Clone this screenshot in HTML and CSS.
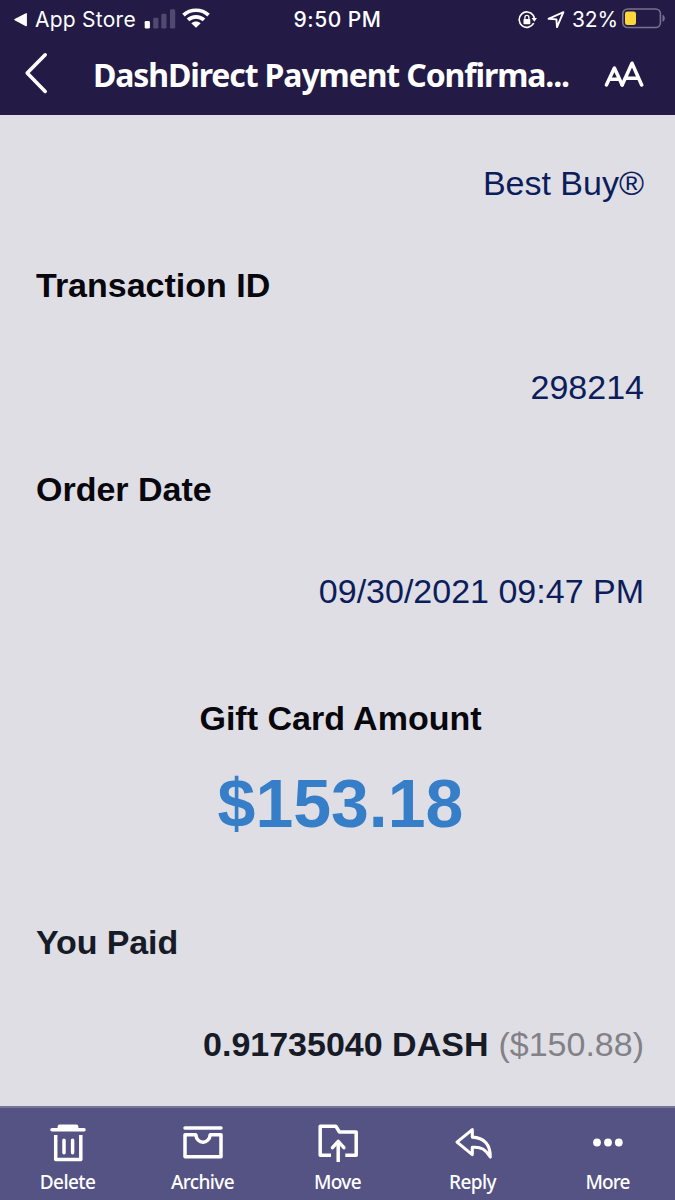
FILE: index.html
```html
<!DOCTYPE html>
<html lang="en">
<head>
<meta charset="utf-8">
<title>DashDirect Payment Confirmation</title>
<link rel="stylesheet" href="styles.css">
</head>
<body>
<div class="screen">
  <header class="top">
    <div class="status">
      <div class="status-left">
        <svg class="back-app" width="14" height="14" viewBox="0 0 14 14"><path d="M1 6.7 12.2.8V12.6Z" fill="#fff" stroke="#fff" stroke-width="1.4" stroke-linejoin="round"/></svg>
        <span class="app-name">App Store</span>
        <svg class="signal" width="32" height="20" viewBox="0 0 32 20"><rect x=".7" y="12" width="5.2" height="7.5" rx="1.3" fill="#fff"/><g fill="#504970"><rect x="9.2" y="8.7" width="5.2" height="10.8" rx="1.3"/><rect x="17.3" y="4.7" width="5.2" height="14.8" rx="1.3"/><rect x="26" y=".3" width="5.2" height="19.2" rx="1.3"/></g></svg>
        <svg class="wifi" width="28" height="20" viewBox="0 0 28 20"><g fill="none" stroke="#fff" stroke-width="3.7"><path d="M1.5 7.1C8.4.6 19.6.6 26.5 7.1"/><path d="M6 11.9c4.4-4.1 11.6-4.1 16 0"/></g><path d="M9.3 15.3c2.7-2.3 6.7-2.3 9.4 0L14 19.8Z" fill="#fff"/></svg>
      </div>
      <span class="time">9:50 PM</span>
      <div class="status-right">
        <svg class="lock" width="20" height="18" viewBox="0 0 20 18"><path d="M15.2 4.2A7.7 7.7 0 1 0 15.7 12.2M15.2 4.2A7.7 7.7 0 0 1 16.4 8" fill="none" stroke="#fff" stroke-width="1.6"/><path d="M13.6 7h5.4l-2.7 3.8Z" fill="#fff"/><rect x="5.5" y="8" width="6.8" height="5.2" rx=".8" fill="#fff"/><path d="M6.9 8.2V6.4a2 2 0 0 1 4 0v1.8" fill="none" stroke="#fff" stroke-width="1.3"/></svg>
        <svg class="locate" width="18" height="18" viewBox="0 0 18 18"><path d="M1.5 7.8 16.4 1.2 10 16.1 9.4 8.4Z" fill="none" stroke="#fff" stroke-width="1.9" stroke-linejoin="round"/></svg>
        <span class="percent">32%</span>
        <svg class="battery" width="44" height="21" viewBox="0 0 44 21"><rect x=".8" y="1" width="37.6" height="18.5" rx="4.8" fill="none" stroke="#777190" stroke-width="1.6"/><rect x="3" y="3.4" width="11" height="13.7" rx="2.4" fill="#ffd73c"/><path d="M40.5 6.8v7c3.1-1 3.1-6 0-7Z" fill="#777190"/></svg>
      </div>
    </div>
    <div class="navbar">
      <svg class="chevron" width="24" height="42" viewBox="0 0 24 42"><path d="M21.2 2.8 3.2 21.1 21.2 39.4" fill="none" stroke="#fff" stroke-width="3.6" stroke-linecap="round" stroke-linejoin="round"/></svg>
      <h1 class="title">DashDirect Payment Confirma...</h1>
      <svg class="text-size" width="40" height="27" viewBox="0 0 40 27"><g fill="none" stroke="#fff" stroke-width="3.5" stroke-linecap="round" stroke-linejoin="round"><path d="M2.4 24 10.4 7 18.2 24M5.5 18.3H15"/><path d="M18.2 24 28 2.2 37.7 24M21 17.2H34.2"/></g></svg>
    </div>
  </header>
  <main class="mail">
    <div class="row value"><span>Best Buy®</span></div>
    <div class="row label"><span>Transaction ID</span></div>
    <div class="row value"><span>298214</span></div>
    <div class="row label"><span>Order Date</span></div>
    <div class="row value"><span>09/30/2021 09:47 PM</span></div>
    <section class="gift">
      <h2 class="gift-label">Gift Card Amount</h2>
      <div class="gift-amount">$153.18</div>
    </section>
    <div class="row label paid-label"><span>You Paid</span></div>
    <div class="row paid"><b>0.91735040 DASH</b><span class="usd">($150.88)</span></div>
  </main>
  <nav class="toolbar">
    <div class="tool">
      <svg width="40" height="40" viewBox="0 0 40 40" fill="none" stroke="#fff" stroke-width="3.5" stroke-linecap="round" stroke-linejoin="round"><path d="M4 7.8H36" /><path d="M10.5 4.5q0-1 1-1H28.5q1 0 1 1V7H10.5Z" fill="#fff" stroke-width="1.8"/><path d="M7.7 13V37.4H32.8V13" stroke-linecap="butt"/><path d="M16 18.3v12.5M24.6 18.3v12.5"/></svg>
      <span class="cap">Delete</span>
    </div>
    <div class="tool">
      <svg width="40" height="40" viewBox="0 0 40 40" fill="none" stroke="#fff" stroke-width="3.5" stroke-linecap="round" stroke-linejoin="round"><path d="M2 6H38M2 12.8H12.8C13.8 22.6 26.2 22.6 27.2 12.8H38V34.7H2Z"/></svg>
      <span class="cap">Archive</span>
    </div>
    <div class="tool">
      <svg width="40" height="40" viewBox="0 0 40 40" fill="none" stroke="#fff" stroke-width="3.5" stroke-linejoin="round"><path d="M13 33.2H2.2V4.2H17.8L21.4 10H38.2V33.2H27.3"/><path d="M20.2 40V20"/><path d="M14.5 25.6 20.2 19.4 25.9 25.6" stroke-linecap="round"/></svg>
      <span class="cap">Move</span>
    </div>
    <div class="tool">
      <svg width="40" height="40" viewBox="0 0 40 40" fill="none" stroke="#fff" stroke-width="3.1" stroke-linejoin="round"><path d="M19.3 7.6 4 20.1 19.3 32.6V25.3C28.2 24.5 32.5 27.4 37.3 35C37.6 23.2 31.3 15.5 19.3 15.1Z"/></svg>
      <span class="cap">Reply</span>
    </div>
    <div class="tool">
      <svg width="40" height="40" viewBox="0 0 40 40" fill="#fff"><circle cx="9" cy="20.5" r="3.9"/><circle cx="20" cy="20.5" r="3.9"/><circle cx="30.8" cy="20.5" r="3.9"/></svg>
      <span class="cap more">More</span>
    </div>
  </nav>
</div>
</body>
</html>
```
FILE: styles.css
```css
* { box-sizing: border-box; }
body { margin: 0; background: #dfdee4; }
svg { display: block; flex: none; }
.screen { width: 675px; height: 1200px; display: flex; flex-direction: column; overflow: hidden; }
.top { height: 115px; background: #231b46; color: #fff; }
.status { height: 38px; display: grid; grid-template-columns: 1fr auto 1fr; align-items: center; font: 400 21px/38px Inter, sans-serif; white-space: nowrap; }
.status-left { display: flex; align-items: center; padding-left: 14px; }
.app-name { width: 101px; margin-left: 7px; padding-top: 1px; letter-spacing: .25px; }
.signal { margin: -1px 0 0 8px; }
.wifi { margin: -3px 0 0 6px; }
.time { font-weight: 500; letter-spacing: .5px; padding-top: 1px; }
.status-right { display: flex; align-items: center; justify-content: flex-end; padding-right: 9px; }
.lock { margin-top: 1px; }
.locate { margin-left: 9px; }
.percent { width: 45px; margin-left: 7px; padding-top: 1px; letter-spacing: -.1px; }
.battery { margin-left: 5px; margin-top: -2px; }
.navbar { height: 77px; display: flex; align-items: center; padding: 0 30px 0 24px; }
.chevron { margin-top: -7px; }
.title { margin: -3px 0 0 45px; width: 476px; font: 700 32px/50px "Noto Sans", sans-serif; letter-spacing: -1.12px; white-space: nowrap; }
.text-size { margin-left: 35px; margin-top: -4px; }
.mail { height: 991px; padding: 17px 31px 0 36px; font: 400 34px/102px "Liberation Sans", Arial, sans-serif; }
.row { height: 102px; display: flex; white-space: nowrap; }
.value { justify-content: flex-end; color: #0c1d5c; }
.label { font-weight: 700; color: #07070d; }
.gift { height: 249px; padding: 45px 0 0 1px; text-align: center; }
.gift-label { margin: 0; font: inherit; font-weight: 700; line-height: 62px; color: #07070d; }
.gift-amount { font-size: 68px; font-weight: 700; line-height: 108px; color: #377ec8; }
.paid-label { color: #161b27; letter-spacing: -.1px; }
.paid { justify-content: flex-end; gap: 10px; color: #161b27; }
.usd { color: #828187; }
.toolbar { height: 94px; display: grid; grid-template-columns: repeat(5, 1fr); background: #545383; border-top: 2px solid #77759c; }
.tool { display: flex; flex-direction: column; align-items: center; padding-top: 14px; color: #fff; }
.cap { font: 500 19px/36px "Noto Sans", sans-serif; margin-top: 2px; letter-spacing: -.6px; white-space: nowrap; }
.more { letter-spacing: -.9px; }
```
